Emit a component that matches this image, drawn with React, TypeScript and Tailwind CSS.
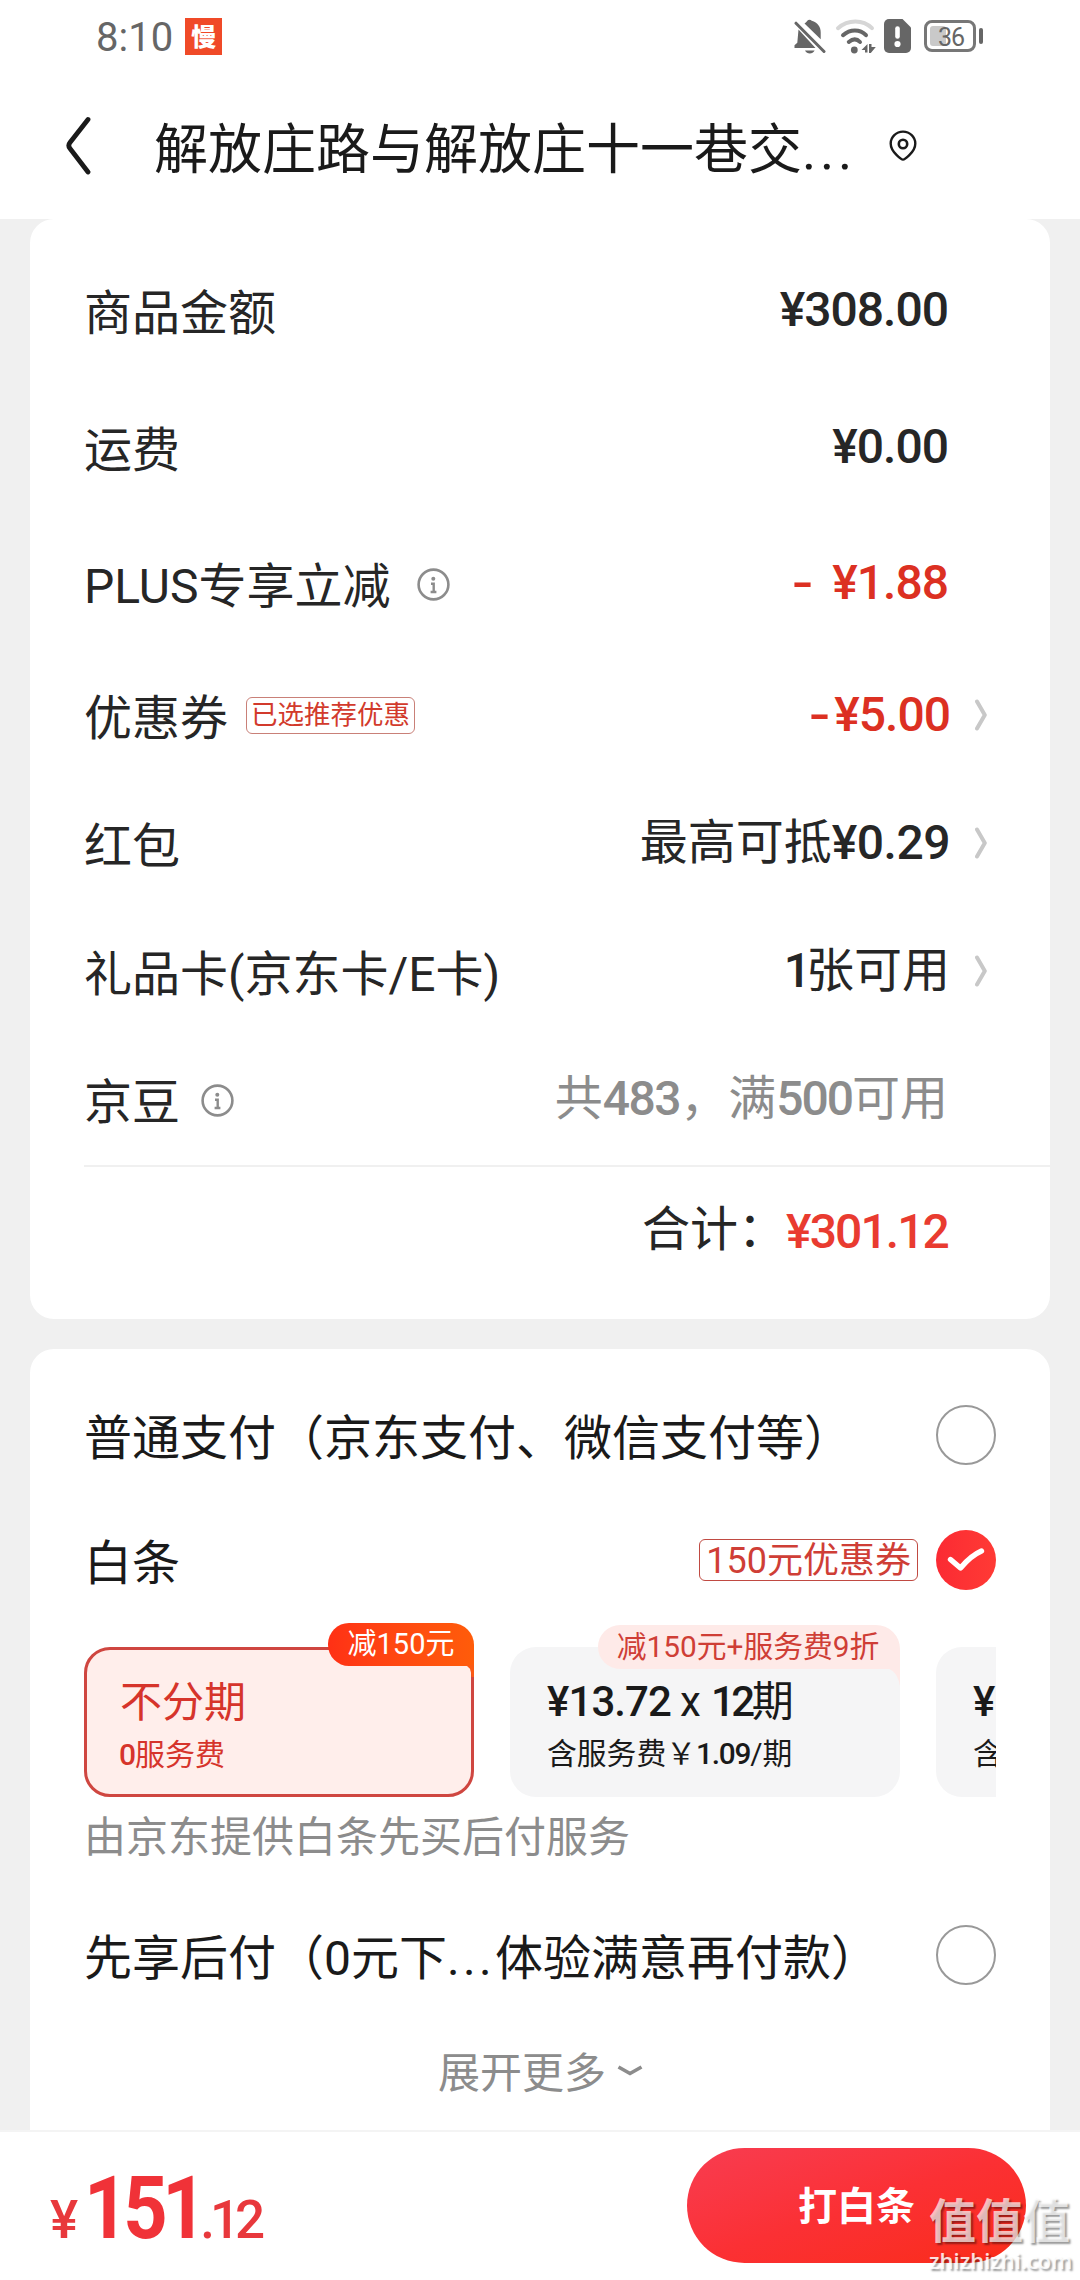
import type { ReactNode } from "react";
import clsx from "clsx";

function Num({ children, className }: { children: ReactNode; className?: string }) {
  return (
    <span className={clsx("font-medium", className ?? "tracking-[-1px]")}>
      {children}
    </span>
  );
}

function Dots() {
  return <span className="tracking-[0.07em]">...</span>;
}

function Minus({ className }: { className?: string }) {
  return (
    <span className={clsx("inline-block w-[20px] scale-x-130 text-center", className)}>
      -
    </span>
  );
}

function InfoIcon() {
  return (
    <svg
      className="relative top-px"
      width="33"
      height="33"
      viewBox="0 0 33 33"
      fill="none"
    >
      <circle cx="16.5" cy="16.5" r="14.9" stroke="#8c8c8c" strokeWidth="2.6" />
      <circle cx="16.3" cy="10.8" r="2" fill="#8c8c8c" />
      <path d="M14 15.8h2.7v8M13.6 24h5.8" stroke="#8c8c8c" strokeWidth="2.4" />
    </svg>
  );
}

function Arrow() {
  return (
    <svg
      className="-mr-[37px] ml-[25px]"
      width="12"
      height="32"
      viewBox="0 0 12 32"
      fill="none"
    >
      <path
        d="M2 2.5 9.8 16 2 29.5"
        stroke="#c8c8c8"
        strokeWidth="4"
        strokeLinecap="round"
        strokeLinejoin="round"
      />
    </svg>
  );
}

function StatusBar() {
  return (
    <div className="flex h-[72px] items-center pr-[97px] pl-24 text-[#666]">
      <span className="relative top-[2px] text-[40px] leading-none">8:10</span>
      <span className="ml-[12px] flex size-[37px] items-center justify-center bg-[#f04a28] text-[25px] leading-none font-black text-white">
        <span className="relative top-px">慢</span>
      </span>
      <div className="ml-auto flex items-center">
        {/* Muted bell */}
        <svg width="32" height="36" viewBox="0 0 32 36" fill="#666">
          <path d="M4.5 11.5 21.5 30H.5v-2.8l2.8-2.4zM10.5 5.6C12 4.2 13 3.7 13.3 2.8c1.1-1.4 3.3-1.4 4.4 0 6 1.8 9 6 9 11.7v6.7z" />
          <path d="M11 32.4h9.6c-1.8 4-7.8 4-9.6 0z" />
          <path
            d="M2 5.2 30 33.5"
            stroke="#666"
            strokeWidth="3"
            strokeLinecap="round"
          />
        </svg>
        {/* Wi-Fi */}
        <svg
          className="ml-[9px]"
          width="42"
          height="36"
          viewBox="0 0 42 36"
          fill="none"
          strokeWidth="4"
          strokeLinecap="round"
        >
          <path d="M3 10.2C13 1.3 28 1.3 37 10.2" stroke="#d6d6d6" />
          <path d="M8 17.2c7-6.4 17-6.4 23 0" stroke="#666" />
          <path d="M13.8 24c4-3.5 8-3.5 11.2 0" stroke="#666" />
          <circle cx="19.3" cy="32" r="3.4" fill="#666" />
          <path d="M26.5 32h3.5v2.500h2.500v-8.500zM34 26v9h1.800l5-6h-4.300v-3z" fill="#666" />
        </svg>
        {/* SIM warning */}
        <svg className="ml-[7px]" width="27" height="34" viewBox="0 0 27 34">
          <path
            d="M5 0h13.5L27 8.5V29a5 5 0 0 1-5 5H5a5 5 0 0 1-5-5V5a5 5 0 0 1 5-5z"
            fill="#666"
          />
          <path
            d="M13.5 9.5v8"
            stroke="#fff"
            strokeWidth="4.6"
            strokeLinecap="round"
          />
          <circle cx="13.5" cy="25" r="3.1" fill="#fff" />
        </svg>
        {/* Battery */}
        <div className="ml-[13px] flex h-8 w-[52px] items-center rounded-[8px] border-3 border-[#777] pl-[3px]">
          <div className="h-5 w-4 rounded-[3px] bg-[#c9c9c9]" />
          <span className="relative top-px -ml-[8px] text-[25px] leading-none tracking-[-1px]">
            36
          </span>
        </div>
        <div className="ml-[3px] h-4 w-1 rounded-full bg-[#666]" />
      </div>
    </div>
  );
}

function Header() {
  return (
    <header className="flex h-[147px] items-start pl-[65px] text-[#1a1a1a]">
      <svg className="mt-[44px]" width="26" height="60" viewBox="0 0 26 60" fill="none">
        <path
          d="M23 3.5 5 26.5q-2.4 3 0 6L23 56"
          stroke="#1a1a1a"
          strokeWidth="4.8"
          strokeLinecap="round"
        />
      </svg>
      <h1 className="mt-[49px] ml-[63px] text-[54px] leading-[60px] whitespace-nowrap">
        解放庄路与解放庄十一巷交
        <Dots />
      </h1>
      <svg className="mt-[58px] ml-[33px]" width="28" height="32" viewBox="0 0 28 32" fill="none">
        <path
          d="M14 29.6c-1 0-12.3-7.3-12.3-16.2a12.3 11.8 0 0 1 24.6 0C26.3 22.3 15 29.6 14 29.6z"
          stroke="#1a1a1a"
          strokeWidth="2.4"
        />
        <circle cx="14" cy="14" r="4.2" stroke="#1a1a1a" strokeWidth="2.6" />
      </svg>
    </header>
  );
}

type PriceRowProps = {
  label: string;
  extra?: ReactNode;
  arrow?: boolean;
  className?: string;
  children: ReactNode;
};

function PriceRow({ label, extra, arrow, className, children }: PriceRowProps) {
  return (
    <div className={clsx("flex items-center justify-between", className)}>
      <div className="flex items-center">
        <span className="relative top-[4px]">{label}</span>
        {extra}
      </div>
      <div className={clsx("flex items-center", arrow && "translate-x-[2px]")}>
        <span className="whitespace-pre">{children}</span>
        {arrow && <Arrow />}
      </div>
    </div>
  );
}

function PriceCard() {
  return (
    <section className="h-[1100px] rounded-[24px] bg-white pt-[22px] pr-[102px] pl-[54px] text-[48px] leading-[60px] text-[#262626]">
      <PriceRow label="商品金额" className="h-[137px]">
        <Num>¥308.00</Num>
      </PriceRow>
      <PriceRow label="运费" className="h-[137px]">
        <Num>¥0.00</Num>
      </PriceRow>
      <PriceRow
        label="PLUS专享立减"
        className="h-[136px]"
        extra={
          <span className="ml-[26px]">
            <InfoIcon />
          </span>
        }
      >
        <Num className="tracking-[-1px] text-[#dc3022]">
          <Minus className="mr-[20px]" />¥1.88
        </Num>
      </PriceRow>
      <PriceRow
        label="优惠券"
        className="h-32"
        arrow
        extra={
          <span className="ml-[18px] flex h-[37px] items-center rounded-[6px] border border-[#c98078] px-[4px] text-[26.5px] leading-none text-[#d23a2c]">
            已选推荐优惠
          </span>
        }
      >
        <Num className="tracking-[-1px] text-[#dc3022]">
          <Minus className="mr-[5px]" />¥5.00
        </Num>
      </PriceRow>
      <PriceRow label="红包" className="h-32" arrow>
        最高可抵<Num className="tracking-[-0.5px]">¥0.29</Num>
      </PriceRow>
      <PriceRow label="礼品卡(京东卡/E卡)" className="h-32" arrow>
        <Num className="tracking-[-5px]">1</Num>张可用
      </PriceRow>
      <PriceRow
        label="京豆"
        className="h-32"
        extra={
          <span className="ml-[21px]">
            <InfoIcon />
          </span>
        }
      >
        <span className="text-[#8c8c8c]">
          共<Num className="tracking-[-1.5px]">483</Num>，满
          <Num className="tracking-[-2px]">500</Num>可用
        </span>
      </PriceRow>
      <div className="mt-[2px] -mr-[102px] h-[2px] bg-[#f0f0f0]" />
      <div className="mt-[33px] flex items-center justify-end">
        <span>合计：</span>
        <Num className="relative top-[2px] tracking-[-1.9px] text-[#e93b30]">
          ¥301.12
        </Num>
      </div>
    </section>
  );
}

function Radio({ checked }: { checked?: boolean }) {
  if (!checked) {
    return <span className="size-[60px] rounded-full border-2 border-[#999]" />;
  }
  return (
    <span className="flex size-[60px] items-center justify-center rounded-full bg-linear-to-r from-[#fb2a33] to-[#ff3a35]">
      <svg width="38" height="26" viewBox="0 0 38 26" fill="none">
        <path
          d="M3.5 12.5 13.5 21Q24 8.5 34.5 4"
          stroke="#fff"
          strokeWidth="5.4"
          strokeLinecap="round"
          strokeLinejoin="round"
        />
      </svg>
    </span>
  );
}

function InstallmentOptions() {
  return (
    <div className="flex gap-9 overflow-hidden pt-[26px]">
      <div className="relative h-[150px] w-[390px] shrink-0 rounded-[26px] border-3 border-[#cf4640] bg-[#ffeeeb] px-[33px] pt-[27px] text-[#d6342b]">
        <div className="absolute -top-[27px] -right-[3px] flex h-[43px] w-[146px] items-center justify-center rounded-l-[21px] rounded-tr-[22px] bg-linear-to-r from-[#ff3015] to-[#ff5c0a] text-[29px] leading-none text-white">
          减150元
        </div>
        {/* Tail joining the badge to the card border */}
        <svg
          className="absolute top-[15px] -right-[3px]"
          width="10"
          height="12"
          viewBox="0 0 10 12"
          fill="#fb5a14"
        >
          <path d="M0 0h10v12H7.5Q7.5 1 0 0z" />
        </svg>
        <p className="text-[42px] leading-[52px]">不分期</p>
        <p className="mt-[6px] -ml-px text-[30px] leading-[40px]">
          <Num>0</Num>服务费
        </p>
      </div>

      <div className="relative h-[150px] w-[390px] shrink-0 rounded-[26px] bg-[#f5f5f6] px-[37px] pt-[29px] text-[#1a1a1a]">
        <div className="absolute -top-[22px] right-0 flex h-[44px] w-[302px] items-center justify-center rounded-tl-[22px] rounded-tr-[24px] rounded-bl-[22px] bg-[#feeae8] text-[29.8px] leading-none text-[#cf3e36]">
          <span className="relative -left-px">减150元+服务费9折</span>
        </div>
        <svg
          className="absolute top-[21px] right-0"
          width="14"
          height="18"
          viewBox="0 0 14 18"
          fill="#feeae8"
        >
          <path d="M0 0h14v18Q11 2 0 0z" />
        </svg>
        <p className="text-[42px] leading-[52px] whitespace-nowrap">
          <Num className="tracking-[-0.9px]">¥13.72</Num>
          <span className="mr-[10px] ml-[9px]">x</span>
          <Num className="tracking-[-3.5px]">12</Num>期
        </p>
        <p className="mt-[6px] text-[29.8px] leading-[40px] whitespace-nowrap">
          含服务费￥<Num className="tracking-[-1.2px]">1.09</Num>/期
        </p>
      </div>

      {/* Next option, peeking in from the right */}
      <div className="h-[150px] w-[390px] shrink-0 rounded-[26px] bg-[#f5f5f6] px-[37px] pt-[29px] text-[#1a1a1a]">
        <p className="text-[42px] leading-[52px]">
          <Num>¥</Num>
        </p>
        <p className="mt-[6px] text-[30px] leading-[40px]">含</p>
      </div>
    </div>
  );
}

function PaymentCard() {
  return (
    <section className="mt-[30px] h-[781px] rounded-t-[24px] bg-white px-[54px] pt-[54px] text-[48px] leading-[60px] text-[#1a1a1a]">
      <div className="flex h-[64px] items-center justify-between">
        <span className="relative top-[4px]">普通支付（京东支付、微信支付等）</span>
        <Radio />
      </div>
      <div className="mt-[61px] flex h-[64px] items-center">
        <span className="relative top-[4px]">白条</span>
        <span className="mr-[18px] ml-auto flex h-[42px] items-center rounded-[6px] border border-[#c04a42] px-[6px] text-[36px] leading-none text-[#cf3e36]">
          <span className="relative top-px">150元优惠券</span>
        </span>
        <Radio checked />
      </div>
      <div className="mt-[29px]">
        <InstallmentOptions />
      </div>
      <p className="mt-[13px] text-[42px] leading-[56px] text-[#8c8c8c]">
        由京东提供白条先买后付服务
      </p>
      <div className="mt-[57px] flex h-[64px] items-center justify-between">
        <span className="relative top-[4px]">
          先享后付（0元下
          <Dots />
          体验满意再付款）
        </span>
        <Radio />
      </div>
      <div className="mt-[57px] flex items-center pl-[354px] text-[42px] leading-[60px] text-[#8c8c8c]">
        展开更多
        <svg className="mb-[6px] ml-[11px]" width="26" height="12" viewBox="0 0 26 12" fill="none">
          <path d="M1.5 2 13 8.5 24.5 2" stroke="#8c8c8c" strokeWidth="3.6" />
        </svg>
      </div>
    </section>
  );
}

function Watermark() {
  return (
    <div className="absolute right-[7px] bottom-[7px] w-[144px] text-white/70 [text-shadow:2px_2px_2px_rgba(0,0,0,0.4)]">
      <div className="text-[47px] leading-[50px] font-bold whitespace-nowrap">值值值</div>
      <div className="mt-[1px] font-['Open_Sans'] text-[22px] leading-[25px] font-semibold whitespace-nowrap text-white/85">
        zhizhizhi.com
      </div>
    </div>
  );
}

function Footer() {
  return (
    <footer className="relative flex h-[150px] items-start justify-between border-t-2 border-[#f4f4f4] bg-white pr-[54px] pl-[50px]">
      <div className="mt-[28px] flex items-baseline leading-[96px] font-medium text-[#e8383c]">
        <span className="text-[53px]">¥</span>
        <span className="ml-[6px] w-[112px] origin-left scale-x-88 text-[88px] font-bold tracking-[-6px] text-[#f03238]">
          151
        </span>
        <span className="ml-[4px] text-[53px] tracking-[-5px]">.12</span>
      </div>
      <button className="mt-[16px] h-[115px] w-[339px] rounded-full bg-linear-to-br from-[#f83c50] via-[#fb3034] to-[#fa2c15] text-[39px] leading-none font-bold text-white">
        <span className="relative top-[2px]">打白条</span>
      </button>
      <Watermark />
    </footer>
  );
}

export default function App() {
  return (
    <div className="h-[2280px] w-[1080px] overflow-hidden bg-white font-['Roboto','Noto_Sans_CJK_SC',sans-serif]">
      <StatusBar />
      <Header />
      <main className="h-[1911px] bg-[#f0f0f0] px-[30px]">
        <PriceCard />
        <PaymentCard />
      </main>
      <Footer />
    </div>
  );
}
